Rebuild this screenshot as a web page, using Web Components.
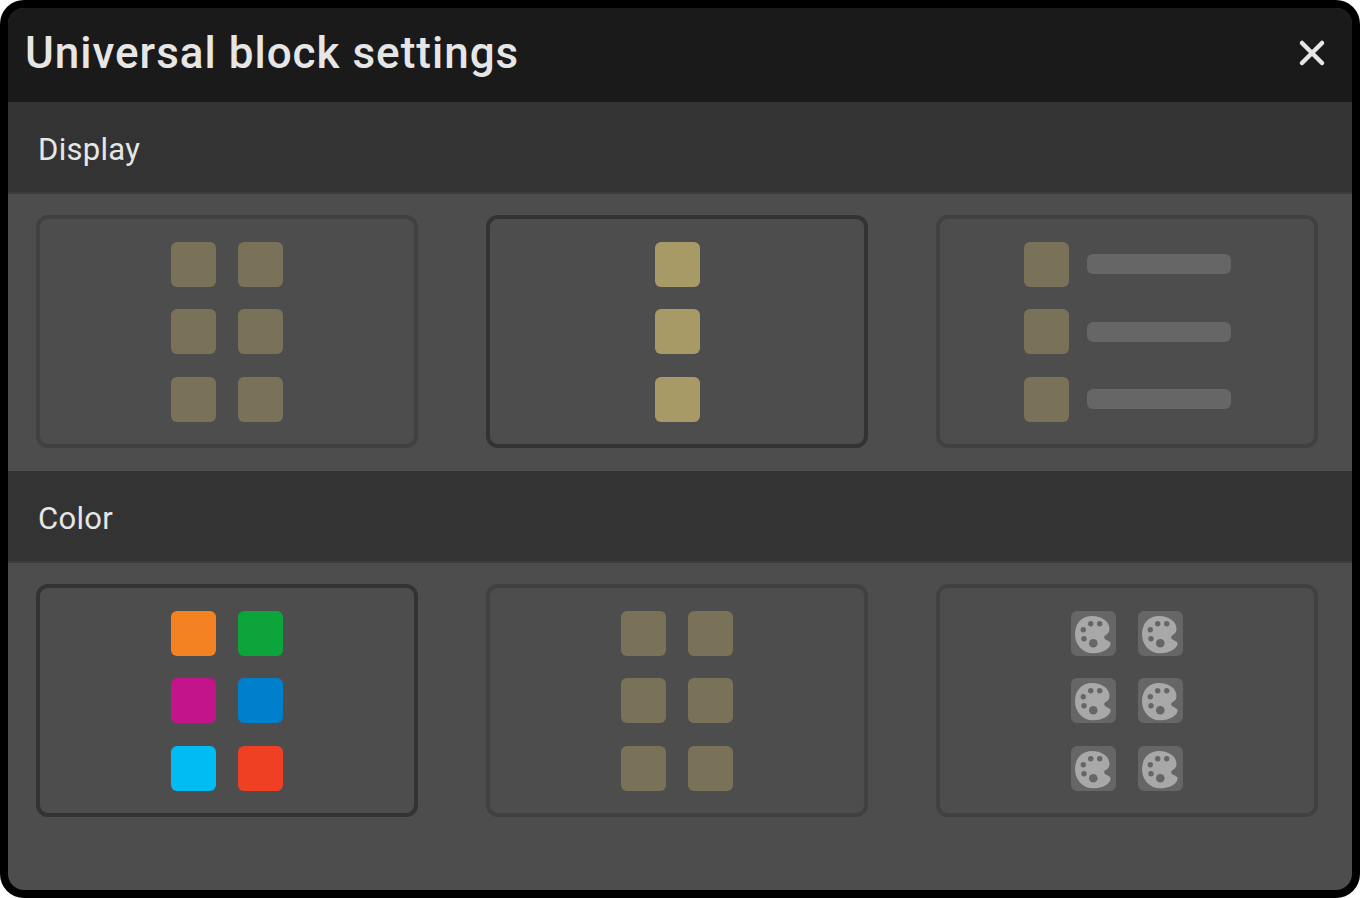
<!DOCTYPE html>
<html>
<head>
<meta charset="utf-8">
<title>Universal block settings</title>
<style>
  html, body { margin: 0; height: 100%; background: #fff; }
  body { font-family: Roboto, "Liberation Sans", sans-serif; }
</style>
</head>
<body>
<settings-window heading="Universal block settings">
  <settings-section heading="Display">
    <option-card>
      <tile-grid columns="2" tone="muted" count="6"></tile-grid>
    </option-card>
    <option-card selected>
      <tile-grid columns="1" tone="gold" count="3"></tile-grid>
    </option-card>
    <option-card>
      <tile-list></tile-list>
    </option-card>
  </settings-section>
  <settings-section heading="Color">
    <option-card selected>
      <tile-grid columns="2" colors="#f58220,#0ba53c,#c4148c,#0080cc,#00bcf2,#f04023" count="6"></tile-grid>
    </option-card>
    <option-card>
      <tile-grid columns="2" tone="muted" count="6"></tile-grid>
    </option-card>
    <option-card>
      <tile-grid columns="2" tone="palette" count="6"></tile-grid>
    </option-card>
  </settings-section>
</settings-window>

<script>
class SettingsWindow extends HTMLElement {
  constructor() {
    super();
    this.shadowDOM = this.attachShadow({ mode: 'open' });
    this.shadowDOM.innerHTML = `
    <style>
      :host {
        display: block;
        box-sizing: border-box;
        height: 898px;
        padding: 8px;
        background: #000;
        border-radius: 24px;
      }
      .panel {
        height: 882px;
        background: #4d4d4d;
        border-radius: 16px;
        overflow: hidden;
      }
      header {
        display: flex;
        align-items: center;
        justify-content: space-between;
        box-sizing: border-box;
        height: 94px;
        padding: 0 24px 4px 17px;
        background: #1a1a1a;
      }
      h1 {
        margin: 0;
        font-size: 44px;
        font-weight: 500;
        letter-spacing: 1px;
        color: #e6e6e6;
      }
      svg { display: block; }
    </style>
    <div class="panel">
      <header>
        <h1></h1>
        <svg width="32" height="32" viewBox="0 0 32 32">
          <path d="M6 6 L26 26 M26 6 L6 26" stroke="#e6e6e6" stroke-width="4.5" stroke-linecap="round" fill="none"/>
        </svg>
      </header>
      <slot></slot>
    </div>
    `;
  }

  connectedCallback() {
    this.shadowDOM.querySelector('h1').textContent = this.getAttribute('heading');
  }
}

class SettingsSection extends HTMLElement {
  constructor() {
    super();
    this.shadowDOM = this.attachShadow({ mode: 'open' });
    this.shadowDOM.innerHTML = `
    <style>
      :host { display: block; }
      h2 {
        display: flex;
        align-items: center;
        box-sizing: border-box;
        height: 92px;
        margin: 0;
        padding: 4px 0 0 30px;
        font-size: 31px;
        font-weight: 400;
        letter-spacing: 0.3px;
        color: #e6e6e6;
        background: #333;
        border-bottom: 2px solid #3d3d3d;
      }
      .options {
        display: grid;
        grid-template-columns: repeat(3, 382px);
        column-gap: 68px;
        padding: 21px 0 23px 28px;
      }
    </style>
    <h2></h2>
    <div class="options"><slot></slot></div>
    `;
  }

  connectedCallback() {
    this.shadowDOM.querySelector('h2').textContent = this.getAttribute('heading');
  }
}

class OptionCard extends HTMLElement {
  constructor() {
    super();
    this.shadowDOM = this.attachShadow({ mode: 'open' });
    this.shadowDOM.innerHTML = `
    <style>
      :host {
        display: flex;
        justify-content: center;
        box-sizing: border-box;
        height: 233px;
        padding: 23px 0 22px;
        border: 4px solid #414141;
        border-radius: 12px;
      }
      :host([selected]) { border-color: #333; }
    </style>
    <slot></slot>
    `;
  }
}

const PALETTE_ICON = `
  <svg width="45" height="45" viewBox="0 0 45 45">
    <path fill="#a8a8a8" d="M21 5C31 5 38.500 10.500 38.500 18C38.500 22 36 23 33.500 25C32 28.500 36 28.500 39.500 31.500C40.500 37 32 42.300 22 42.300C11 42.300 4 33 4 23.500C4 12 11 5 21 5Z"/>
    <g fill="#666">
      <circle cx="12.300" cy="18.700" r="2.700"/>
      <circle cx="19.700" cy="12.700" r="2.700"/>
      <circle cx="28.700" cy="12.700" r="2.700"/>
      <circle cx="13" cy="27.700" r="2.700"/>
      <circle cx="22.300" cy="32.300" r="4.300"/>
    </g>
  </svg>`;

class TileGrid extends HTMLElement {
  constructor() {
    super();
    this.shadowDOM = this.attachShadow({ mode: 'open' });
  }

  connectedCallback() {
    const tone = this.getAttribute('tone');
    const colors = (this.getAttribute('colors') || '').split(',');
    const tones = { muted: '#7a7258', gold: '#a89a66', palette: '#666' };
    let tiles = '';
    for (let i = 0; i < Number(this.getAttribute('count')); i++) {
      const color = tones[tone] || colors[i];
      tiles += `<div class="tile" style="background:${color}">${tone === 'palette' ? PALETTE_ICON : ''}</div>`;
    }
    this.shadowDOM.innerHTML = `
    <style>
      :host {
        display: grid;
        grid-template-columns: repeat(${this.getAttribute('columns')}, 45px);
        grid-template-rows: repeat(3, 45px);
        column-gap: 22px;
        row-gap: 22.4px;
      }
      .tile { border-radius: 6px; }
      svg { display: block; }
    </style>
    ${tiles}
    `;
  }
}

class TileList extends HTMLElement {
  constructor() {
    super();
    this.shadowDOM = this.attachShadow({ mode: 'open' });
    this.shadowDOM.innerHTML = `
    <style>
      :host {
        display: grid;
        grid-template-columns: 45px 144px;
        grid-template-rows: repeat(3, 45px);
        column-gap: 18px;
        row-gap: 22.4px;
        align-items: center;
      }
      .tile { height: 45px; border-radius: 6px; background: #7a7258; }
      .line { height: 20px; margin-bottom: 0.2px; border-radius: 6px; background: #666; }
    </style>
    <div class="tile"></div><div class="line"></div>
    <div class="tile"></div><div class="line"></div>
    <div class="tile"></div><div class="line"></div>
    `;
  }
}

customElements.define('settings-window', SettingsWindow);
customElements.define('settings-section', SettingsSection);
customElements.define('option-card', OptionCard);
customElements.define('tile-grid', TileGrid);
customElements.define('tile-list', TileList);
</script>
</body>
</html>
